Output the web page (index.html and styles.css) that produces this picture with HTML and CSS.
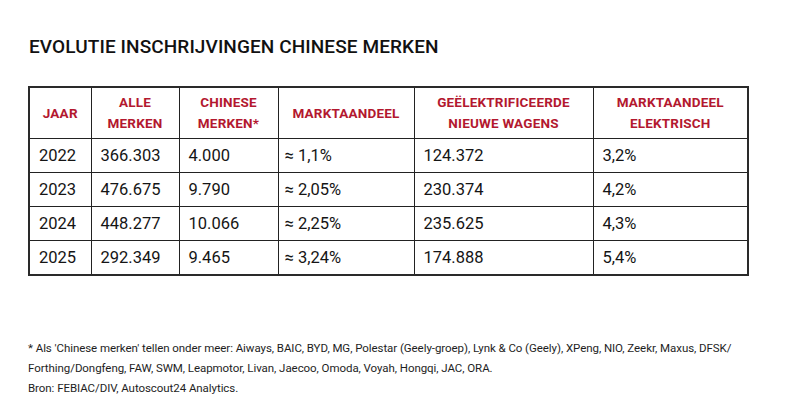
FILE: index.html
```html
<!DOCTYPE html>
<html lang="nl">
<head>
<meta charset="utf-8">
<link rel="stylesheet" href="styles.css">
</head>
<body>
<div class="page">
  <h1 class="title">EVOLUTIE INSCHRIJVINGEN CHINESE MERKEN</h1>
  <table class="data">
    <colgroup>
      <col class="c1"><col class="c2"><col class="c3"><col class="c4"><col class="c5"><col class="c6">
    </colgroup>
    <thead>
      <tr>
        <th>JAAR</th>
        <th>ALLE<br>MERKEN</th>
        <th>CHINESE<br>MERKEN*</th>
        <th>MARKTAANDEEL</th>
        <th>GEËLEKTRIFICEERDE<br>NIEUWE WAGENS</th>
        <th>MARKTAANDEEL<br>ELEKTRISCH</th>
      </tr>
    </thead>
    <tbody>
      <tr><td>2022</td><td>366.303</td><td>4.000</td><td class="approx">≈ 1,1%</td><td>124.372</td><td>3,2%</td></tr>
      <tr><td>2023</td><td>476.675</td><td>9.790</td><td class="approx">≈ 2,05%</td><td>230.374</td><td>4,2%</td></tr>
      <tr><td>2024</td><td>448.277</td><td>10.066</td><td class="approx">≈ 2,25%</td><td>235.625</td><td>4,3%</td></tr>
      <tr><td>2025</td><td>292.349</td><td>9.465</td><td class="approx">≈ 3,24%</td><td>174.888</td><td>5,4%</td></tr>
    </tbody>
  </table>
  <p class="note">* Als 'Chinese merken' tellen onder meer: Aiways, BAIC, BYD, MG, Polestar (Geely-groep), Lynk &amp; Co (Geely), XPeng, NIO, Zeekr, Maxus, DFSK/<br>Forthing/Dongfeng, FAW, SWM, Leapmotor, Livan, Jaecoo, Omoda, Voyah, Hongqi, JAC, ORA.<br>Bron: FEBIAC/DIV, Autoscout24 Analytics.</p>
</div>
</body>
</html>
```
FILE: styles.css
```css
html, body {
  margin: 0;
  padding: 0;
  background: #ffffff;
}
.page {
  padding: 35px 0 0 28px;
  font-family: Roboto, "Liberation Sans", sans-serif;
  color: #141414;
}
.title {
  margin: 0 0 27px 1px;
  font-size: 19px;
  line-height: 24px;
  font-weight: 500;
  letter-spacing: 0.1px;
  color: #111;
}
.data {
  border-collapse: collapse;
  width: 719px;
  table-layout: fixed;
  border: 2px solid #2a2a2a;
}
.c1 { width: 62px; }
.c2 { width: 88px; }
.c3 { width: 99px; }
.c4 { width: 136px; }
.c5 { width: 179px; }
.c6 { width: 155px; }
.data th, .data td {
  border: 1.5px solid #222;
}
.data th {
  height: 50px;
  padding: 0 4px;
  font-size: 13.5px;
  line-height: 21px;
  font-weight: 700;
  color: #b3182f;
  text-align: center;
  vertical-align: middle;
  letter-spacing: 0.2px;
}
.data td {
  height: 33px;
  padding: 0 0 0 9px;
  font-size: 16.5px;
  line-height: 20px;
  color: #151515;
  text-align: left;
  vertical-align: middle;
}
.data td.approx { padding-left: 6px; }
.note {
  margin: 62px 0 0 0;
  font-size: 11.5px;
  line-height: 20px;
  color: #1e1e1e;
  letter-spacing: -0.06px;
}
```
